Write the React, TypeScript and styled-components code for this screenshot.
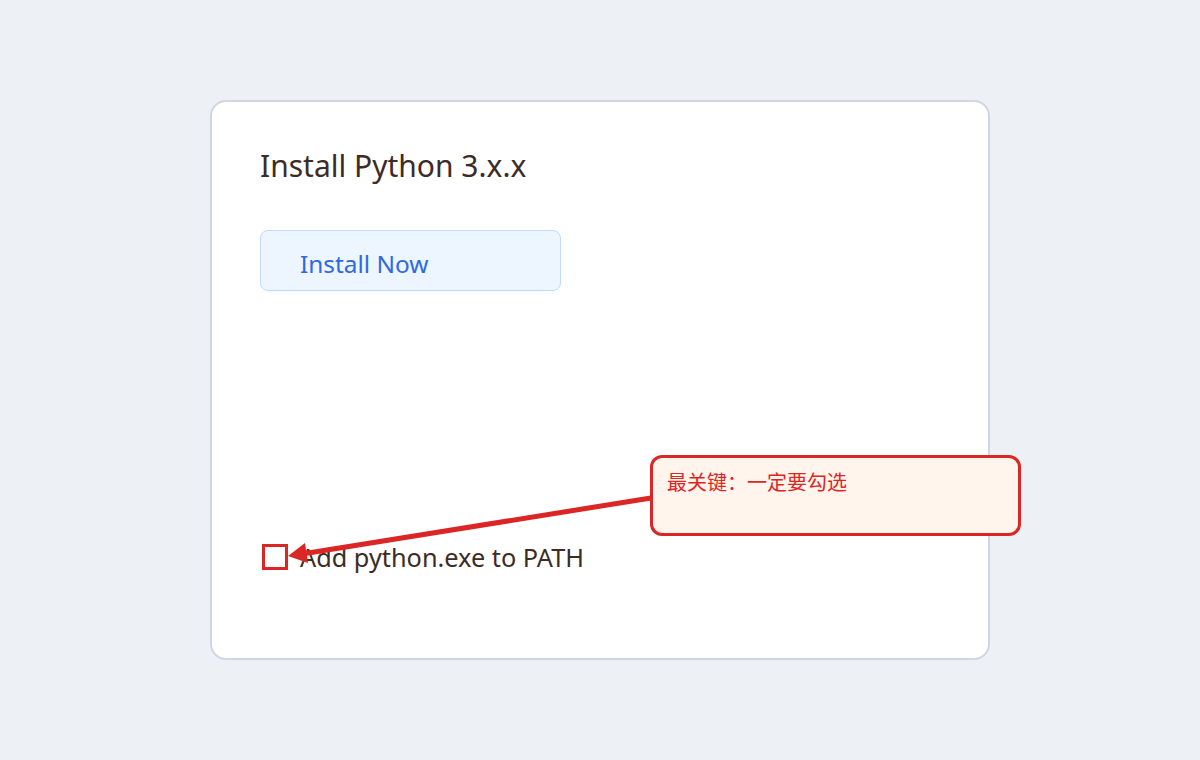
import * as React from "react";
import styled, { createGlobalStyle } from "styled-components";

const GlobalStyle = createGlobalStyle`
  html, body {
    margin: 0;
    padding: 0;
    background: #edf1f6;
  }
  body {
    font-family: "Noto Sans", "Open Sans", "Noto Sans CJK SC", sans-serif;
  }
`;

const Page = styled.div`
  min-height: 100vh;
  display: flex;
  align-items: center;
  justify-content: center;
`;

const Card = styled.div`
  position: relative;
  box-sizing: border-box;
  width: 780px;
  height: 560px;
  background: #ffffff;
  border: 2px solid #cdd6e3;
  border-radius: 16px;
  padding: 44px 48px 84px 48px;
  display: flex;
  flex-direction: column;
`;

const Title = styled.h1`
  margin: 0;
  font-size: 30px;
  font-weight: 400;
  line-height: 40px;
  color: #3d2b25;
`;

const InstallButton = styled.button`
  margin-top: 44px;
  box-sizing: border-box;
  width: 301px;
  height: 61px;
  padding: 6px 0 0 39px;
  text-align: left;
  background: #edf5ff;
  border: 1px solid #bfdcfd;
  border-radius: 8px;
  font-family: inherit;
  font-size: 24.4px;
  color: #2f6ae0;
  cursor: pointer;
`;

const OptionRow = styled.label`
  margin-top: auto;
  display: flex;
  align-items: center;
  gap: 12px;
  padding-left: 2px;
  font-size: 25.3px;
  color: #3d2b25;
`;

const Box = styled.span`
  box-sizing: border-box;
  width: 26px;
  height: 26px;
  border: 3px solid #dc2626;
  background: #ffffff;
`;

const Callout = styled.div`
  position: absolute;
  left: 438px;
  top: 353px;
  box-sizing: border-box;
  width: 371px;
  height: 81px;
  padding: 12px 14px;
  background: #fff5ec;
  border: 3px solid #dc2626;
  border-radius: 12px;
  font-family: "Noto Sans CJK SC", sans-serif;
  font-size: 20px;
  line-height: 24px;
  color: #dc2626;
`;

const ArrowLayer = styled.svg`
  position: absolute;
  left: -2px;
  top: -2px;
  overflow: visible;
  pointer-events: none;
`;

export default function App() {
  return (
    <Page>
      <GlobalStyle />
      <Card>
        <Title>Install Python 3.x.x</Title>
        <InstallButton>Install Now</InstallButton>
        <OptionRow>
          <Box />
          Add python.exe to PATH
        </OptionRow>
        <ArrowLayer width={780} height={560}>
          <line x1={441} y1={398} x2={92} y2={454} stroke="#dc2626" strokeWidth={5} />
          <polygon points="78,456 95,443 98,463" fill="#dc2626" />
        </ArrowLayer>
        <Callout>最关键：一定要勾选</Callout>
      </Card>
    </Page>
  );
}
